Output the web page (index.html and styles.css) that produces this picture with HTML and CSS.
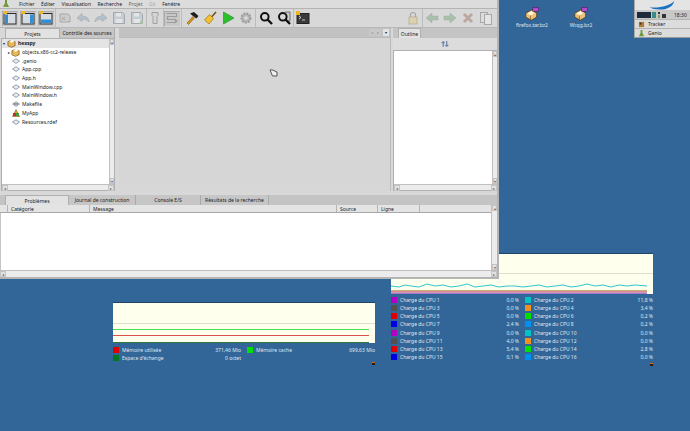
FILE: index.html
```html
<!DOCTYPE html>
<html lang="fr">
<head>
<meta charset="utf-8">
<title>Genio</title>
<link rel="stylesheet" href="styles.css">
</head>
<body>
<svg class="defs" width="0" height="0">
  <defs>
    <g id="doc"><path d="M.5 4 4 1.800 7.500 4 4 6.400z" fill="#e8eef4" stroke="#7a8a9a" stroke-width=".8"/></g>
    <g id="pkg"><path d="M1 3 5 1.500 9 3V7.500L5 9.300 1 7.500z" fill="#e8b95a" stroke="#6b4a10" stroke-width=".7"/><path d="M2.500 2.500 6 .8 8.500 2.500 5 4.300z" fill="#fff"/></g>
    <g id="bz"><path d="M1 8 9 3.500 15 8 15 13 8 17 1 13z" fill="#eac27a" stroke="#4a3210" stroke-width=".9"/><path d="M3 8 8.500 5 12 8 7 11z" fill="#fff6dc"/><path d="M7 11V17" stroke="#8a5c20"/><rect x="10" y="0.500" width="7.500" height="5" fill="#b04cc8" stroke="#3a1048" stroke-width=".6"/></g>
    <g id="tag"><rect x="0" y="0" width="4" height="3" fill="#e8b830"/></g>
  </defs>
</svg>

<section class="monitor cpu-mon">
  <div class="graph g-cpu">
    <i class="gl l-mid"></i>
    <svg class="spark" viewBox="0 0 256 12" preserveAspectRatio="none">
      <path d="M0 4 8 5 14 3 20 4 28 5 36 2 44 4 52 3 60 5 68 4 76 2 84 5 92 4 100 3 108 5 116 4 124 4 132 5 140 4 148 3 156 5 164 4 172 3 180 5 188 4 196 2 204 4 212 3 220 5 228 3 236 4 244 3 256 4" fill="none" stroke="#2cc8cc"/>
      <path d="M0 8.500H256" stroke="#c4b478"/>
      <path d="M0 9.800H256" stroke="#d8506a"/>
      <path d="M0 11.200H256" stroke="#7a3ab0"/>
    </svg>
  </div>
  <ul class="legend cpu-list">
    <li><i class="sw" data-c="purple"></i><span>Charge du CPU 1</span><em>0,0 %</em></li>
    <li><i class="sw" data-c="teal"></i><span>Charge du CPU 2</span><em>11,8 %</em></li>
    <li><i class="sw" data-c="grey"></i><span>Charge du CPU 3</span><em>0,0 %</em></li>
    <li><i class="sw" data-c="orange"></i><span>Charge du CPU 4</span><em>3,4 %</em></li>
    <li><i class="sw" data-c="red"></i><span>Charge du CPU 5</span><em>0,0 %</em></li>
    <li><i class="sw" data-c="lime"></i><span>Charge du CPU 6</span><em>0,2 %</em></li>
    <li><i class="sw" data-c="blue"></i><span>Charge du CPU 7</span><em>2,4 %</em></li>
    <li><i class="sw" data-c="sky"></i><span>Charge du CPU 8</span><em>0,2 %</em></li>
    <li><i class="sw" data-c="purple"></i><span>Charge du CPU 9</span><em>0,0 %</em></li>
    <li><i class="sw" data-c="teal"></i><span>Charge du CPU 10</span><em>0,0 %</em></li>
    <li><i class="sw" data-c="grey"></i><span>Charge du CPU 11</span><em>4,0 %</em></li>
    <li><i class="sw" data-c="orange"></i><span>Charge du CPU 12</span><em>0,0 %</em></li>
    <li><i class="sw" data-c="red"></i><span>Charge du CPU 13</span><em>5,4 %</em></li>
    <li><i class="sw" data-c="lime"></i><span>Charge du CPU 14</span><em>2,8 %</em></li>
    <li><i class="sw" data-c="blue"></i><span>Charge du CPU 15</span><em>0,1 %</em></li>
    <li><i class="sw" data-c="sky"></i><span>Charge du CPU 16</span><em>0,0 %</em></li>
  </ul>
  <i class="grip"></i>
</section>

<main class="win">
  <nav class="menu">
    <svg class="menu-logo" viewBox="0 0 8 8" width="8" height="8"><path d="M3 0h2v3l2 4H1l2-4z" fill="#6a9a3a"/><path d="M1 7h3V5z" fill="#c08a20"/></svg>
    <span class="mi">Fichier</span><span class="mi">Éditer</span><span class="mi">Visualisation</span><span class="mi">Recherche</span><span class="mi dim">Projet</span><span class="mi faint">Git</span><span class="mi">Fenêtre</span>
  </nav>

  <div class="toolbar">
    <div class="tgroup">
      <span class="tb on"><svg viewBox="0 0 14 14"><rect x="1" y="2.500" width="12" height="10.500" fill="#d4dade" stroke="#2c2c2c"/><rect x="2" y="3.500" width="3" height="8.500" fill="#2f8fd8"/><use href="#tag"/></svg></span>
      <span class="tb on"><svg viewBox="0 0 14 14"><rect x="1" y="2.500" width="12" height="10.500" fill="#d4dade" stroke="#2c2c2c"/><rect x="9" y="3.500" width="3" height="8.500" fill="#2f8fd8"/><use href="#tag"/></svg></span>
      <span class="tb on"><svg viewBox="0 0 14 14"><rect x="1" y="2.500" width="12" height="10.500" fill="#d4dade" stroke="#2c2c2c"/><rect x="2" y="8.500" width="10" height="3.500" fill="#2f8fd8"/><use href="#tag"/></svg></span>
    </div>
    <div class="tgroup tight">
      <span class="tb off"><svg viewBox="0 0 14 14"><path d="M2 3h8l2 2v6H2z" fill="#cccccc" stroke="#a8a8a8"/><path d="M4 6l3 3M7 6 4 9" stroke="#a2a2a2"/></svg></span>
      <span class="tb off"><svg viewBox="0 0 14 14"><path d="M1 7 6 2.500V5c4 0 7 2 7 6-1.500-2-4-3-7-3v2.500z" fill="#b4c0cc" stroke="#a0a8b0" stroke-width=".6"/></svg></span>
      <span class="tb off"><svg viewBox="0 0 14 14"><path d="M13 7 8 2.500V5C4 5 1 7 1 11c1.500-2 4-3 7-3v2.500z" fill="#b4c0cc" stroke="#a0a8b0" stroke-width=".6"/></svg></span>
      <span class="tb off"><svg viewBox="0 0 14 14"><path d="M1.500 1.500h9l2 2v9h-11z" fill="#c4ccd4" stroke="#a0a8b0"/><rect x="4" y="2" width="5" height="3.500" fill="#e4e4e4"/><rect x="3.500" y="8" width="7" height="4" fill="#e4e4e4"/></svg></span>
      <span class="tb off"><svg viewBox="0 0 14 14"><path d="M1.500 1.500h9l2 2v9h-11z" fill="#c4ccd4" stroke="#a0a8b0"/><rect x="4" y="2" width="5" height="3.500" fill="#e4e4e4"/><rect x="3.500" y="8" width="7" height="4" fill="#e4e4e4"/><path d="M10 10h3v3h-3z" fill="#a8c0a8"/></svg></span>
    </div>
    <div class="tgroup flush">
      <span class="tb off"><svg viewBox="0 0 14 14"><path d="M4 1.500h6v3l-1 1v7H5v-7l-1-1z" fill="#d4d4d4" stroke="#a0a0a0"/></svg></span>
    </div>
    <div class="tgroup wide-gap">
      <span class="tb off pressed"><svg viewBox="0 0 14 14"><path d="M1.500 2.500h10v3h-9v3h8v3h-9M9 8l3 2-3 2" fill="none" stroke="#9c9c9c" stroke-width="1.200"/></svg></span>
    </div>
    <div class="tgroup wide-gap">
      <span class="tb"><svg viewBox="0 0 14 14"><path d="M2 12 8 5.500 9.500 7l-6 6.500z" fill="#d8981c" stroke="#6a4008" stroke-width=".5"/><path d="M5 2.500 9 1l4.500 4-2 2.500L8 5z" fill="#1e1e1e"/></svg></span>
      <span class="tb"><svg viewBox="0 0 14 14"><path d="M13 1 8.500 6" stroke="#7a4a10" stroke-width="1.500"/><path d="M6.500 3.500 10.500 7.500 6 13 1.500 9z" fill="#f2c030" stroke="#8a6810" stroke-width=".6"/></svg></span>
      <span class="tb"><svg viewBox="0 0 14 14"><path d="M2.500 1 13 7 2.500 13z" fill="#2cc02c" stroke="#1c8a1c" stroke-width=".6"/></svg></span>
      <span class="tb off"><svg viewBox="0 0 14 14"><circle cx="7" cy="7" r="4.500" fill="#b8b8b8" stroke="#9a9a9a" stroke-width="2" stroke-dasharray="2 1"/><circle cx="7" cy="7" r="1.800" fill="#ddd"/></svg></span>
    </div>
    <div class="tgroup">
      <span class="tb"><svg viewBox="0 0 14 14"><circle cx="5.800" cy="5.800" r="3.800" fill="#d8d8d8" stroke="#111" stroke-width="2"/><path d="M8.500 8.500 13 13" stroke="#111" stroke-width="2.400"/></svg></span>
      <span class="tb"><svg viewBox="0 0 14 14"><path d="M8 1h5v9H9" fill="#ccc" stroke="#555" stroke-width=".8"/><circle cx="5.800" cy="5.800" r="3.800" fill="#d8d8d8" stroke="#111" stroke-width="2"/><path d="M8.500 8.500 13 13" stroke="#111" stroke-width="2.400"/></svg></span>
    </div>
    <div class="tgroup plain">
      <span class="tb"><svg viewBox="0 0 14 14"><rect x="1" y="2.500" width="12" height="10" fill="#3a3a3a" stroke="#222"/><path d="M3 5l2 1.500L3 8M6 9h3" stroke="#eee" stroke-width=".8" fill="none"/><rect x="0" y="0" width="4" height="4" fill="#f0b820"/></svg></span>
    </div>
    <div class="tspacer"></div>
    <div class="tgroup">
      <span class="tb off"><svg viewBox="0 0 14 14"><path d="M4.500 6V4a2.500 2.500 0 0 1 5 0v2" fill="none" stroke="#a8a8a8" stroke-width="1.200"/><rect x="3" y="6" width="8" height="7" fill="#dcd2b0" stroke="#b0a888" stroke-width=".7"/></svg></span>
    </div>
    <div class="tgroup plain end">
      <span class="tb off"><svg viewBox="0 0 14 14"><path d="M1 7 7 2v3h6v4H7v3z" fill="#a8c0ac" stroke="#a0acA0" stroke-width=".5"/></svg></span>
      <span class="tb off"><svg viewBox="0 0 14 14"><path d="M13 7 7 2v3H1v4h6v3z" fill="#a8c0ac" stroke="#a0acA0" stroke-width=".5"/></svg></span>
      <span class="tb off"><svg viewBox="0 0 14 14"><path d="M3 3l8 8M11 3l-8 8" stroke="#bca8a0" stroke-width="3"/></svg></span>
      <span class="tb off"><svg viewBox="0 0 14 14"><rect x="1.500" y="1.500" width="7" height="10" fill="#dcdcdc" stroke="#a8a8a8"/><rect x="5.500" y="3.500" width="7" height="10" fill="#e4e4e4" stroke="#a8a8a8"/></svg></span>
    </div>
  </div>

  <div class="work">
    <section class="projects">
      <div class="tabs small">
        <span class="lead"></span>
        <span class="tab active t-proj">Projets</span>
        <span class="tab t-src">Contrôle des sources</span>
      </div>
      <div class="pane">
        <div class="tree">
          <div class="row root"><i class="arrow">▾</i><svg viewBox="0 0 10 10" width="9" height="9"><use href="#pkg"/></svg><b>hexspy</b></div>
          <div class="row sub"><i class="arrow">▸</i><svg viewBox="0 0 10 10" width="9" height="9"><use href="#pkg"/></svg>objects.x86-cc2-release</div>
          <div class="row"><svg viewBox="0 0 8 8" width="8" height="8"><use href="#doc"/></svg>.genio</div>
          <div class="row"><svg viewBox="0 0 8 8" width="8" height="8"><use href="#doc"/></svg>App.cpp</div>
          <div class="row"><svg viewBox="0 0 8 8" width="8" height="8"><use href="#doc"/></svg>App.h</div>
          <div class="row"><svg viewBox="0 0 8 8" width="8" height="8"><use href="#doc"/></svg>MainWindow.cpp</div>
          <div class="row"><svg viewBox="0 0 8 8" width="8" height="8"><use href="#doc"/></svg>MainWindow.h</div>
          <div class="row"><svg viewBox="0 0 8 8" width="8" height="8"><use href="#doc"/><path d="M2 4h4" stroke="#555"/></svg>Makefile</div>
          <div class="row"><svg viewBox="0 0 8 8" width="8" height="8"><path d="M4 .5 7.500 7.500H.5z" fill="#e0a020" stroke="#6a4a10" stroke-width=".5"/><rect x="1" y="4" width="3" height="3" fill="#c03030"/><rect x="4" y="4" width="3" height="3" fill="#40a040"/></svg>MyApp</div>
          <div class="row"><svg viewBox="0 0 8 8" width="8" height="8"><use href="#doc"/></svg>Resources.rdef</div>
        </div>
        <div class="vbar"><i class="sb-btn">▴</i><i class="sb-fill"></i><i class="sb-btn">▾</i></div>
        <div class="hbar"><i class="sb-btn">◂</i><i class="sb-fill"></i><i class="sb-btn">▸</i></div>
      </div>
    </section>

    <section class="editor">
      <div class="editor-tabs">
        <i class="nav">◂</i><i class="nav">▸</i><i class="nav dark">▾</i>
      </div>
      <div class="cursor-wrap">
        <svg class="cursor" viewBox="0 0 9 8" width="9" height="8"><path d="M1 1 3 .8 8 3V7H3.500z" fill="#eee" stroke="#333" stroke-width=".8"/></svg>
      </div>
    </section>

    <section class="outline">
      <div class="tabs small">
        <span class="lead"></span>
        <span class="tab active t-out">Outline</span>
      </div>
      <div class="out-tool"><svg viewBox="0 0 9 9" width="8" height="8"><path d="M2.500 1v7M6.500 1v7" stroke="#5a78a8" stroke-width="1.200"/><path d="M.5 3h4M4.500 6h4" stroke="#5a78a8"/></svg></div>
      <div class="pane out-pane">
        <div class="tree"></div>
        <div class="vbar"><i class="sb-btn">▴</i><i class="sb-fill"></i><i class="sb-btn">▾</i></div>
        <div class="hbar"><i class="sb-btn">◂</i><i class="sb-fill"></i><i class="sb-btn">▸</i></div>
      </div>
    </section>
  </div>

  <section class="bottom">
    <div class="tabs wide">
      <span class="lead"></span>
      <span class="tab active t-b1">Problèmes</span>
      <span class="tab t-b2">Journal de construction</span>
      <span class="tab t-b3">Console E/S</span>
      <span class="tab t-b4">Résultats de la recherche</span>
    </div>
    <div class="table">
      <div class="thead">
        <span class="th c0"></span><span class="th c1">Catégorie</span><span class="th c2">Message</span><span class="th c3">Source</span><span class="th c4">Ligne</span><span class="th c5"></span>
      </div>
      <div class="tbody"></div>
      <div class="vbar"><i class="sb-btn">▴</i><i class="sb-fill"></i><i class="sb-btn">▾</i></div>
      <div class="hbar"><i class="sb-btn">◂</i><i class="sb-fill"></i><i class="sb-btn">▸</i></div>
    </div>
  </section>
</main>

<figure class="desk-icon ic1"><svg viewBox="0 0 18 18" width="14" height="14"><use href="#bz"/></svg><figcaption>firefox.tar.bz2</figcaption></figure>
<figure class="desk-icon ic2"><svg viewBox="0 0 18 18" width="14" height="14"><use href="#bz"/></svg><figcaption>Wcqg.bz2</figcaption></figure>

<aside class="deskbar">
  <div class="bar-logo"><svg viewBox="0 0 56 11" width="56" height="10"><path d="M14 8C26 9 36 6 41 1 40 6 34 11 24 10.500 20 10.500 16 9.500 14 8z" fill="#1c70c0"/></svg></div>
  <div class="tray">
    <span class="cpu"></span>
    <svg viewBox="0 0 15 8" width="15" height="8"><rect x="0" y="1" width="4" height="6" fill="#3a8a8a"/><path d="M6 1h2v2H6zM10 3h4v4h-4z" fill="#333"/><path d="M6 4h2v3H6z" fill="#7aa05a"/></svg>
    <span class="clock">18:30</span>
  </div>
  <div class="app"><svg viewBox="0 0 8 8" width="7" height="7"><path d="M1 1h6v6H1z" fill="#b07a30"/><path d="M2 2h2v2H2z" fill="#333"/></svg>Tracker</div>
  <div class="app"><svg viewBox="0 0 8 8" width="7" height="7"><path d="M3 0h2v3l2 4H1l2-4z" fill="#6a9a3a"/></svg>Genio</div>
</aside>

<section class="monitor mem">
  <div class="graph g-mem">
    <i class="gl l-top"></i>
    <i class="gl l-green"></i>
    <i class="gl l-red"></i>
    <i class="gl l-dark"></i>
  </div>
  <ul class="legend">
    <li><i class="sw" data-c="red"></i><span>Mémoire utilisée</span><em>371,46 Mio</em></li>
    <li><i class="sw" data-c="lime"></i><span>Mémoire cache</span><em>699,63 Mio</em></li>
    <li><i class="sw" data-c="green"></i><span>Espace d'échange</span><em>0 octet</em></li>
  </ul>
  <i class="grip"></i>
</section>
</body>
</html>
```

FILE: styles.css
```css
* { box-sizing: border-box; }
html, body { margin: 0; height: 100%; }
body {
  width: 690px; height: 431px; overflow: hidden; position: relative;
  background: #336698;
  font-family: "Noto Sans", "Open Sans", sans-serif;
  font-size: 5px; color: #222;
}
.defs { position: absolute; }
i, em { font-style: normal; }

.win {
  position: absolute; z-index: 2; left: 0; top: 0; width: 499px; height: 279px;
  background: #d8d8d8; border-right: 2px solid #b4b4b4; border-bottom: 2px solid #b4b4b4;
  display: flex; flex-direction: column;
}
.menu {
  height: 9px; flex: none; display: flex; align-items: center; background: #dcdcdc;
  border-bottom: 1px solid #b4b4b4; padding-left: 2px;
}
.menu-logo { margin-right: 9px; }
.mi { margin-right: 6.500px; line-height: 8px; }
.dim { color: #666; }
.faint { color: #aaa; }

.toolbar {
  height: 19px; flex: none; display: flex; background: #d8d8d8;
  border-bottom: 1px solid #b8b8b8; padding-left: 2px;
}
.tgroup {
  display: flex; align-items: center; gap: 2px; padding-right: 1px;
  border-right: 1px solid #bcbcbc; margin-right: 1px;
}
.tgroup.tight { margin-right: 0; }
.tgroup.flush { padding-right: 0; margin-right: 0; }
.tgroup.wide-gap { margin-right: 2px; }
.tgroup.plain { border-right: 0; }
.tgroup.end { margin-right: 2px; padding-right: 1px; }
.tspacer { flex: 1; }
.tb { width: 16px; height: 15px; display: flex; align-items: center; justify-content: center; }
.tb svg { width: 14px; height: 14px; }
.tb.on, .tb.pressed { background: #c8c8c8; box-shadow: inset 1px 1px 0 #ababab; }

.work { display: flex; height: 163px; flex: none; padding-left: 1px; gap: 0; }
.projects { width: 114px; display: flex; flex-direction: column; margin-right: 4px; }
.editor { width: 272px; display: flex; flex-direction: column; background: #d6d6d6; margin-right: 2px; border-right: 1px solid #bcbcbc; }
.outline { flex: 1; min-width: 0; display: flex; flex-direction: column; }

.tabs { display: flex; align-items: flex-end; background: #c4c4c4; flex: none; }
.tabs.small { height: 10px; background: #c4c4c4; }
.projects .tabs.small { background: #d8d8d8; }
.tabs.wide { height: 10px; margin-top: 4px; }
.lead { width: 4px; height: 100%; flex: none; }
.bottom .lead { width: 5px; }
.outline .lead { width: 5px; }
.tab {
  height: 100%; display: flex; align-items: center; justify-content: center;
  white-space: nowrap; background: #c6c6c6; border-right: 1px solid #aaa;
}
.tab.active { background: #e2e2e2; border: 1px solid #b0b0b0; border-bottom: 0; }
.t-proj { width: 55px; }
.t-src { width: 55px; }
.t-out { width: 23px; }
.t-b1 { width: 64px; }
.t-b2 { width: 67px; }
.t-b3 { width: 65px; }
.t-b4 { width: 68px; }

.pane {
  flex: 1; display: grid; grid-template-columns: 1fr 5px; grid-template-rows: 1fr 6px;
  border: 1px solid #b0b0b0; min-height: 0;
}
.tree { background: #fff; overflow: hidden; min-width: 0; }
.row {
  height: 8.700px; display: flex; align-items: center; gap: 2px; padding-left: 10px;
  position: relative; white-space: nowrap;
}
.row svg { flex: none; }
.row .arrow { position: absolute; left: 6px; font-size: 4px; color: #222; }
.root { background: #e4e4e4; padding-left: 5px; }
.root .arrow { left: 1px; }
.root b { font-weight: 700; }
.sub { padding-left: 9px; }

.vbar { background: #ececec; display: flex; flex-direction: column; border-left: 1px solid #c0c0c0; }
.hbar { background: #ececec; display: flex; grid-column: 1 / 3; border-top: 1px solid #c0c0c0; }
.sb-btn {
  flex: none; width: 6px; height: 6px; font-size: 4px; line-height: 5px; text-align: center;
  color: #666; background: #e2e2e2; border: 1px solid #c4c4c4;
}
.vbar .sb-btn { width: 100%; }
.sb-fill { flex: 1; background: #ececec; }

.editor-tabs {
  height: 10px; background: #c2c2c2; display: flex; justify-content: flex-end; align-items: center;
  padding-right: 1px; border-bottom: 1px solid #bcbcbc; flex: none;
}
.nav { width: 6px; height: 7px; font-size: 4px; line-height: 7px; text-align: center; color: #999; background: #c8c8c8; }
.nav.dark { color: #222; background: #e4e4e4; margin-left: 2px; }
.cursor-wrap { flex: 1; padding: 31px 0 0 150px; }
.cursor { display: block; }

.out-tool { height: 12px; display: flex; align-items: center; justify-content: center; background: #dcdcdc; flex: none; }
.out-pane { border-right: 0; }

.bottom { flex: 1; display: flex; flex-direction: column; min-height: 0; }
.table { flex: 1; display: grid; grid-template-columns: 1fr 6px; grid-template-rows: 8px 1fr 7px; min-height: 0; }
.thead { display: flex; background: #e4e4e4; border-bottom: 1px solid #a8a8a8; }
.th { display: flex; align-items: center; padding-left: 3px; border-right: 1px solid #b4b4b4; height: 100%; flex: none; }
.c0 { width: 8px; }
.c1 { width: 82px; }
.c2 { width: 247px; }
.c3 { width: 41px; }
.c4 { width: 42px; }
.c5 { flex: 1; border-right: 0; }
.tbody { background: #fff; grid-column: 1; border-left: 1px solid #c4c4c4; }
.table .vbar { grid-row: 1 / 3; grid-column: 2; }
.table .hbar { grid-row: 3; }

.desk-icon {
  position: absolute; margin: 0; top: 7px; display: flex; flex-direction: column; align-items: center;
  color: #dfe8f2; width: 50px;
}
.desk-icon figcaption { margin-top: 1px; white-space: nowrap; }
.ic1 { left: 507px; }
.ic2 { left: 556px; }

.deskbar {
  position: absolute; left: 634px; top: 0; width: 56px; display: flex; flex-direction: column;
  background: #d8d8d8; border-left: 1px solid #aaa; border-bottom: 1px solid #999;
}
.bar-logo { height: 10px; background: #e4e4e4; display: flex; }
.tray { height: 9px; display: flex; align-items: center; gap: 1px; padding-left: 2px; background: #c8c8c8; }
.cpu { width: 14px; height: 6px; background: #1d2a3c; }
.clock { margin-left: 6px; }
.app { height: 9px; display: flex; align-items: center; gap: 3px; padding-left: 3px; background: #dcdcdc; border-top: 1px solid #b4b4b4; }

.monitor { position: absolute; color: #dfe8f2; }
.monitor .graph { position: relative; background: #ffffee; border-top: 1px solid #1f4468; height: 41px; }
.mem { left: 113px; top: 302px; width: 262px; height: 63px; }
.cpu-mon { left: 391px; top: 253px; width: 262px; height: 113px; }
.gl { position: absolute; left: 0; right: 0; height: 1px; }
.l-top { top: 20px; background: #dedecc; }
.l-green { top: 26px; right: 6px; background: #4ede4e; }
.l-red { top: 32px; right: 6px; background: #e0504a; }
.l-dark { top: 39px; right: 6px; background: #2e7a3c; }
.l-mid { top: 19px; background: #dedecc; }
.spark { position: absolute; left: 0; bottom: 0; width: 256px; height: 12px; }

.legend {
  list-style: none; margin: 3px 0 0; padding: 0;
  display: grid; grid-template-columns: 1fr 1fr; column-gap: 6px; row-gap: 1px;
}
.cpu-list { margin-top: 2px; row-gap: 1.290px; }
.legend li { display: flex; align-items: center; height: 7px; white-space: nowrap; }
.legend span { flex: 1; margin-left: 3px; }
.sw { width: 6px; height: 6px; display: block; flex: none; }
.sw[data-c="red"] { background: #e00000; }
.sw[data-c="lime"] { background: #00e000; }
.sw[data-c="green"] { background: #007a20; }
.sw[data-c="purple"] { background: #b000c0; }
.sw[data-c="teal"] { background: #00c4c4; }
.sw[data-c="grey"] { background: #505050; }
.sw[data-c="orange"] { background: #f09020; }
.sw[data-c="blue"] { background: #0000e0; }
.sw[data-c="sky"] { background: #0090f0; }
.grip { position: absolute; right: 0; bottom: 0; width: 3px; height: 3px; background: #2a1c10; border-top: 1px solid #c87020; }
```
